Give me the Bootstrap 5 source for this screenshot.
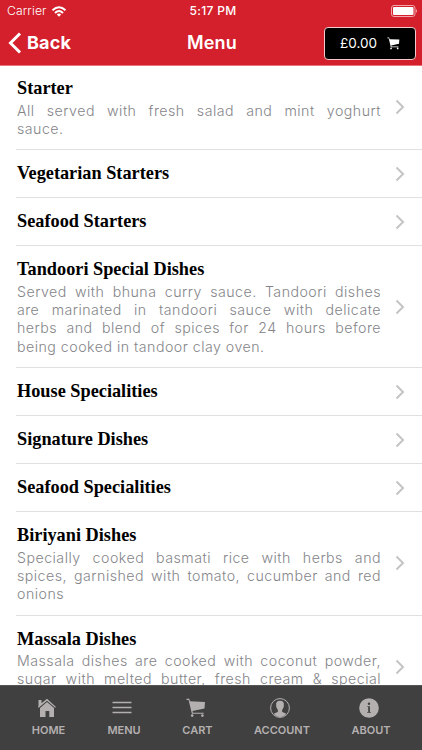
<!DOCTYPE html>
<html lang="en">
<head>
<meta charset="utf-8">
<meta name="viewport" content="width=device-width, initial-scale=1">
<title>Menu</title>
<link href="https://cdn.jsdelivr.net/npm/bootstrap@5.3.0/dist/css/bootstrap.min.css" rel="stylesheet">
<style>
body{font-family:Inter,"Liberation Sans",sans-serif;background:#fff}
.screen{width:422px;height:750px}
.top-area{height:66px;background:#d3202c;border-bottom:1px solid #e8737b}
.status-row{height:21px;padding:1px 4px 0 7px;font-size:12px;line-height:20px}
.status-row>*,.title-row>*{flex:1 1 0}
.carrier{font-size:12.2px;font-weight:300;letter-spacing:.1px}
.clock{font-weight:500;letter-spacing:.3px;padding-left:1px}
.title-row{height:44px;padding:0 6px 0 8px}
.back-link{font-size:18px;font-weight:700;line-height:44px;letter-spacing:.15px}
.back-link svg{margin-right:5px}
.page-title{font-size:18px;font-weight:600;line-height:44px;letter-spacing:.2px}
.basket{width:92px;height:33px;border:1.5px solid #f4c9cc;border-radius:4px;font-size:13.5px}
.basket svg{margin-left:10px}
.menu-list{margin-top:-1px}
.menu-row{margin-left:16px;border-bottom:1px solid #e0e0e0;padding:12px 17px 0 1px}
.menu-row:last-child{border:0}
.r1{height:48.1px}.r2{height:85px}.r3{height:103.2px}.r4{height:121.9px}
.dish-title{font:700 18.3px/22px "Liberation Serif",serif;color:#000;margin:0}
.dish-text{font-size:14.2px;font-weight:300;line-height:18.3px;letter-spacing:.48px;color:#858589;margin:2.500px 0 0;width:364px}
.dish-text span{display:block;white-space:nowrap;text-align:justify;text-align-last:justify}
.dish-text .end{text-align-last:left}
.chev-tall{margin-bottom:12px}
.tabs{height:65px;background:#404040;border-top:1px solid #555;padding:12px 32px 0;color:#b5b0b0;font-size:11px;font-weight:600}
.tabs svg{display:block;margin-right:4px}
.tab{line-height:14px;white-space:nowrap}
.tab span{margin-top:5px}
.t1{width:33px}.t2{width:32px}.t3{width:29px}.t4{width:54px}.t5{width:38px}
</style>
<script src="https://cdn.jsdelivr.net/npm/bootstrap@5.3.0/dist/js/bootstrap.bundle.min.js"></script>
</head>
<body>
<svg class="d-none" xmlns="http://www.w3.org/2000/svg">
<symbol id="chevron" viewBox="0 0 10 16"><path d="M1.500 1.500 8 8l-6.500 6.500" fill="none" stroke="#c4c4c6" stroke-width="2"/></symbol>
<symbol id="cart" viewBox="0 0 20 20"><path d="M.5.8h2.700l.8 2.500 15 .6-.5 6.500-12 2.500.4 1.800h10.800v1.100H5.900L2.600 2H.5z"/><circle cx="6.200" cy="17.600" r="1.300"/><circle cx="16.400" cy="17.600" r="1.300"/></symbol>
</svg>
<div class="screen d-flex flex-column overflow-hidden">
<header class="top-area text-white flex-shrink-0">
<div class="status-row d-flex">
<div class="d-flex align-items-center gap-1"><span class="carrier">Carrier</span><svg width="16" height="11" viewBox="0 0 16 11" fill="none" stroke="#fff" stroke-width="2"><path d="M1.500 4.200Q8-1.800 14.500 4.200M4 6.900Q8 3.200 12 6.900"/><path d="M5.800 8.400Q8 6.800 10.200 8.400L8 10.800z" fill="#fff" stroke="none"/></svg></div>
<div class="clock text-center">5:17 PM</div>
<div class="d-flex justify-content-end align-items-center"><svg width="27" height="12" viewBox="0 0 27 12"><rect x=".5" y=".5" width="23.500" height="11" rx="2.500" fill="none" stroke="#f3a6ab"/><rect x="2" y="2" width="20.500" height="8" rx="1" fill="#fff"/><path d="M25 4q2 2 0 4z" fill="#f3a6ab"/></svg></div>
</div>
<div class="title-row d-flex align-items-center">
<div class="back-link d-flex align-items-center"><svg width="14" height="22" viewBox="0 0 14 22"><path d="M12 1.500 2.500 11l9.500 9.500" fill="none" stroke="#fff" stroke-width="3"/></svg>Back</div>
<div class="page-title text-center">Menu</div>
<div class="d-flex justify-content-end"><div class="basket bg-black d-flex align-items-center justify-content-center">£0.00<svg width="13" height="13" fill="#fff"><use href="#cart"/></svg></div></div>
</div>
</header>
<main class="menu-list flex-grow-1 overflow-hidden">
<div class="menu-row r2 d-flex justify-content-between"><div><h2 class="dish-title">Starter</h2><p class="dish-text"><span>All served with fresh salad and mint yoghurt</span> <span class="end">sauce.</span></p></div><svg class="chev-tall align-self-center" width="10" height="16"><use href="#chevron"/></svg></div>
<div class="menu-row r1 d-flex justify-content-between"><h2 class="dish-title">Vegetarian Starters</h2><svg width="10" height="24" viewBox="0 -4 10 24"><use href="#chevron" width="10" height="16"/></svg></div>
<div class="menu-row r1 d-flex justify-content-between"><h2 class="dish-title">Seafood Starters</h2><svg width="10" height="24" viewBox="0 -4 10 24"><use href="#chevron" width="10" height="16"/></svg></div>
<div class="menu-row r4 d-flex justify-content-between"><div><h2 class="dish-title">Tandoori Special Dishes</h2><p class="dish-text"><span>Served with bhuna curry sauce. Tandoori dishes</span> <span>are marinated in tandoori sauce with delicate</span> <span>herbs and blend of spices for 24 hours before</span> <span class="end">being cooked in tandoor clay oven.</span></p></div><svg class="chev-tall align-self-center" width="10" height="16"><use href="#chevron"/></svg></div>
<div class="menu-row r1 d-flex justify-content-between"><h2 class="dish-title">House Specialities</h2><svg width="10" height="24" viewBox="0 -4 10 24"><use href="#chevron" width="10" height="16"/></svg></div>
<div class="menu-row r1 d-flex justify-content-between"><h2 class="dish-title">Signature Dishes</h2><svg width="10" height="24" viewBox="0 -4 10 24"><use href="#chevron" width="10" height="16"/></svg></div>
<div class="menu-row r1 d-flex justify-content-between"><h2 class="dish-title">Seafood Specialities</h2><svg width="10" height="24" viewBox="0 -4 10 24"><use href="#chevron" width="10" height="16"/></svg></div>
<div class="menu-row r3 d-flex justify-content-between"><div><h2 class="dish-title">Biriyani Dishes</h2><p class="dish-text"><span>Specially cooked basmati rice with herbs and</span> <span>spices, garnished with tomato, cucumber and red</span> <span class="end">onions</span></p></div><svg class="chev-tall align-self-center" width="10" height="16"><use href="#chevron"/></svg></div>
<div class="menu-row r3 d-flex justify-content-between"><div><h2 class="dish-title">Massala Dishes</h2><p class="dish-text"><span>Massala dishes are cooked with coconut powder,</span> <span>sugar with melted butter, fresh cream &amp; special</span></p></div><svg class="chev-tall align-self-center" width="10" height="16"><use href="#chevron"/></svg></div>
</main>
<nav class="tabs d-flex justify-content-between flex-shrink-0">
<div class="tab t1 d-flex flex-column align-items-center"><svg width="20" height="20" viewBox="0 0 20 20" fill="currentColor"><path d="M1.500 8V2h3v3.200L10 .8l9 8.200-.8.8L10 2.700 1.700 9.800.9 9z"/><path d="m10 4 7 6v9h-4.700v-6H8.500v6H3v-9z"/></svg><span>HOME</span></div>
<div class="tab t2 d-flex flex-column align-items-center"><svg width="20" height="20" viewBox="0 0 20 20" fill="none" stroke="currentColor" stroke-width="1.500"><path d="M.5 4.500h19M.5 9.500h19M.5 14.500h19"/></svg><span>MENU</span></div>
<div class="tab t3 d-flex flex-column align-items-center"><svg width="20" height="20" fill="currentColor"><use href="#cart"/></svg><span>CART</span></div>
<div class="tab t4 d-flex flex-column align-items-center"><svg width="20" height="20" viewBox="0 0 20 20"><circle cx="10" cy="10" r="9.400" fill="none" stroke="currentColor"/><path d="M10 2.800c3 0 4.300 2 3.800 4.700-.1.800.2 1-.2 1.700-.3.600-.6.700-.8 1.600-.3 1-.8 1.200-.8 2.200 0 1.600 2.400 1.700 4.200 2.800C14.500 18 12.300 19 10 19s-4.500-1-6.200-3.200C5.600 14.700 8 14.600 8 13c0-1-.5-1.200-.8-2.200-.2-.9-.5-1-.8-1.600-.4-.7-.1-.9-.2-1.700C5.700 4.800 7 2.800 10 2.800z" fill="currentColor"/></svg><span>ACCOUNT</span></div>
<div class="tab t5 d-flex flex-column align-items-center"><svg width="20" height="20" viewBox="0 0 20 20"><circle cx="10" cy="10" r="9.800" fill="currentColor"/><circle cx="10" cy="5.800" r="1.200" fill="#404040"/><path d="M8.300 8.200h2.600v5.800h1v.8H8.200V14h1V9h-.9z" fill="#404040"/></svg><span>ABOUT</span></div>
</nav>
</div>
</body>
</html>
